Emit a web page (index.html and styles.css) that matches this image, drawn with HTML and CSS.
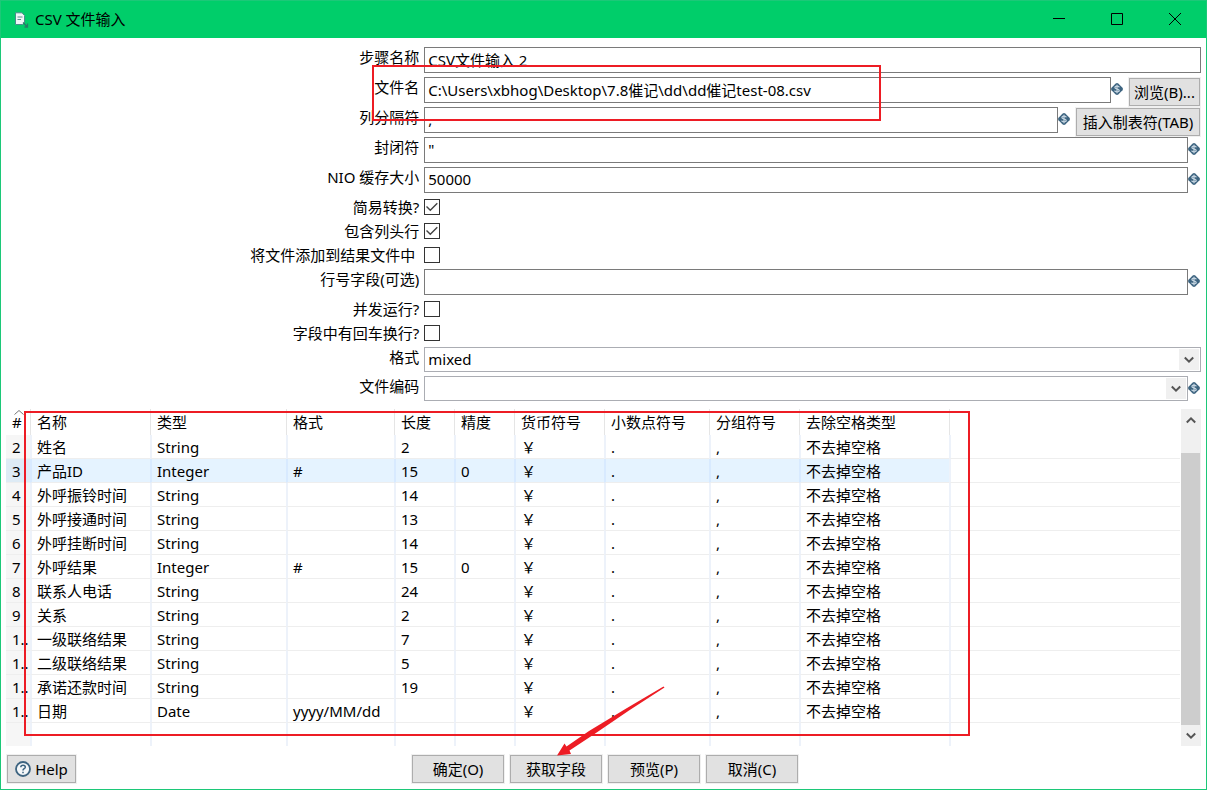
FILE: index.html
```html
<!DOCTYPE html>
<html lang="zh-CN">
<head>
<meta charset="utf-8">
<title>CSV 文件输入</title>
<link rel="stylesheet" href="styles.css">
</head>
<body>
<svg class="defs" aria-hidden="true">
  <symbol id="var" viewBox="0 0 12 12">
    <path d="M6 0L7.300 .5L11.500 4.700L12 6L11.500 7.300L7.300 11.500L6 12L4.700 11.500L.5 7.300L0 6L.5 4.700L4.700 .5Z" fill="#3d6480"/>
    <path d="M8.300 4.300C8 2.900 3.900 2.700 3.900 4.500C3.900 6.300 8.200 5.500 8.200 7.500C8.200 9.300 4 9.100 3.600 7.600M6 1.800V10.200" fill="none" stroke="#c3d3df" stroke-width="1.300"/>
  </symbol>
  <symbol id="down" viewBox="0 0 10 8"><path d="M.8 1.500L5 5.700L9.200 1.500" fill="none" stroke="#555" stroke-width="2"/></symbol>
  <symbol id="up" viewBox="0 0 10 8"><path d="M.8 6.500L5 2.300L9.200 6.500" fill="none" stroke="#555" stroke-width="2"/></symbol>
  <symbol id="tick" viewBox="0 0 16 16"><path d="M2.500 7.500L6.300 11.300L13.300 4.300" fill="none" stroke="#444" stroke-width="1.400"/></symbol>
</svg>
<main class="window">
  <header class="titlebar">
    <svg class="app-icon" viewBox="0 0 15 16">
      <path d="M1.500.8H8L10.500 3.500V11L8.500 12.500H1.500Z" fill="#eef7f6" stroke="#4a8c8c"/>
      <path d="M3.500 5H8.500M3.500 7.500H7" stroke="#5d9090" fill="none"/>
      <path d="M9 10.500L13 14.500M13.500 11.500V15H10.500" stroke="#287a68" stroke-width="1.300" fill="none"/>
    </svg>
    <h1 class="title">CSV 文件输入</h1>
    <button class="caption" aria-label="最小化"><svg viewBox="0 0 14 14"><path d="M1 6.500H13" /></svg></button>
    <button class="caption" aria-label="最大化"><svg viewBox="0 0 14 14"><path d="M1.500 1.500H12.500V12.500H1.500Z"/></svg></button>
    <button class="caption" aria-label="关闭"><svg viewBox="0 0 14 14"><path d="M1 1L13 13M13 1L1 13"/></svg></button>
  </header>

  <form class="form">
    <div class="row"><label for="step">步骤名称</label><div class="field"><input class="text" id="step" value="CSV文件输入 2"></div></div>
    <div class="row"><label for="file">文件名</label><div class="field side"><input class="text" id="file" value="C:\Users\xbhog\Desktop\7.8催记\dd\dd催记test-08.csv"><svg class="var"><use href="#var"/></svg><button type="button" class="btn browse">浏览(B)...</button></div></div>
    <div class="row"><label for="sep">列分隔符</label><div class="field side"><input class="text" id="sep" value=","><svg class="var"><use href="#var"/></svg><button type="button" class="btn tab">插入制表符(TAB)</button></div></div>
    <div class="row"><label for="quote">封闭符</label><div class="field side"><input class="text" id="quote" value="&quot;"><svg class="var"><use href="#var"/></svg></div></div>
    <div class="row"><label for="nio">NIO 缓存大小</label><div class="field side"><input class="text" id="nio" value="50000"><svg class="var"><use href="#var"/></svg></div></div>
    <div class="row check"><label for="lazy">简易转换?</label><div class="field"><span class="box"><input type="checkbox" id="lazy" checked><svg><use href="#tick"/></svg></span></div></div>
    <div class="row check"><label for="head">包含列头行</label><div class="field"><span class="box"><input type="checkbox" id="head" checked><svg><use href="#tick"/></svg></span></div></div>
    <div class="row check"><label for="add" class="spaced">将文件添加到结果文件中</label><div class="field"><span class="box"><input type="checkbox" id="add"><svg><use href="#tick"/></svg></span></div></div>
    <div class="row"><label for="rownum">行号字段(可选)</label><div class="field side"><input class="text" id="rownum" value=""><svg class="var"><use href="#var"/></svg></div></div>
    <div class="row check"><label for="par">并发运行?</label><div class="field"><span class="box"><input type="checkbox" id="par"><svg><use href="#tick"/></svg></span></div></div>
    <div class="row check"><label for="nl">字段中有回车换行?</label><div class="field"><span class="box"><input type="checkbox" id="nl"><svg><use href="#tick"/></svg></span></div></div>
    <div class="row combo"><label for="fmt">格式</label><div class="field"><span class="drop"><select id="fmt"><option>mixed</option></select><span class="arrow"><svg><use href="#down"/></svg></span></span></div></div>
    <div class="row combo"><label for="enc">文件编码</label><div class="field side"><span class="drop"><select id="enc"><option></option></select><span class="arrow"><svg><use href="#down"/></svg></span></span><svg class="var"><use href="#var"/></svg></div></div>
  </form>

  <section class="grid">
    <div class="grid-view">
      <table>
        <colgroup><col class="c-num"><col class="c-name"><col class="c-type"><col class="c-format"><col class="c-short"><col class="c-short"><col class="c-cur"><col class="c-dec"><col class="c-cur"><col class="c-trim"><col></colgroup>
        <thead><tr><th class="num"><svg class="sort" viewBox="0 0 10 5"><path d="M.5 4.500L5 .5L9.500 4.500"/></svg>#</th><th>名称</th><th>类型</th><th>格式</th><th>长度</th><th>精度</th><th>货币符号</th><th>小数点符号</th><th>分组符号</th><th>去除空格类型</th><th></th></tr></thead>
        <tbody>
          <tr><td>2</td><td>姓名</td><td>String</td><td></td><td>2</td><td></td><td>&#xFFE5;</td><td>.</td><td>,</td><td>不去掉空格</td><td></td></tr>
          <tr class="selected"><td>3</td><td>产品ID</td><td>Integer</td><td>#</td><td>15</td><td>0</td><td>&#xFFE5;</td><td>.</td><td>,</td><td>不去掉空格</td><td></td></tr>
          <tr><td>4</td><td>外呼振铃时间</td><td>String</td><td></td><td>14</td><td></td><td>&#xFFE5;</td><td>.</td><td>,</td><td>不去掉空格</td><td></td></tr>
          <tr><td>5</td><td>外呼接通时间</td><td>String</td><td></td><td>13</td><td></td><td>&#xFFE5;</td><td>.</td><td>,</td><td>不去掉空格</td><td></td></tr>
          <tr><td>6</td><td>外呼挂断时间</td><td>String</td><td></td><td>14</td><td></td><td>&#xFFE5;</td><td>.</td><td>,</td><td>不去掉空格</td><td></td></tr>
          <tr><td>7</td><td>外呼结果</td><td>Integer</td><td>#</td><td>15</td><td>0</td><td>&#xFFE5;</td><td>.</td><td>,</td><td>不去掉空格</td><td></td></tr>
          <tr><td>8</td><td>联系人电话</td><td>String</td><td></td><td>24</td><td></td><td>&#xFFE5;</td><td>.</td><td>,</td><td>不去掉空格</td><td></td></tr>
          <tr><td>9</td><td>关系</td><td>String</td><td></td><td>2</td><td></td><td>&#xFFE5;</td><td>.</td><td>,</td><td>不去掉空格</td><td></td></tr>
          <tr><td>1..</td><td>一级联络结果</td><td>String</td><td></td><td>7</td><td></td><td>&#xFFE5;</td><td>.</td><td>,</td><td>不去掉空格</td><td></td></tr>
          <tr><td>1..</td><td>二级联络结果</td><td>String</td><td></td><td>5</td><td></td><td>&#xFFE5;</td><td>.</td><td>,</td><td>不去掉空格</td><td></td></tr>
          <tr><td>1..</td><td>承诺还款时间</td><td>String</td><td></td><td>19</td><td></td><td>&#xFFE5;</td><td>.</td><td>,</td><td>不去掉空格</td><td></td></tr>
          <tr><td>1..</td><td>日期</td><td>Date</td><td>yyyy/MM/dd</td><td></td><td></td><td>&#xFFE5;</td><td>.</td><td>,</td><td>不去掉空格</td><td></td></tr>
          <tr class="blank"><td></td><td></td><td></td><td></td><td></td><td></td><td></td><td></td><td></td><td></td><td></td></tr>
        </tbody>
      </table>
    </div>
    <div class="scroll">
      <button class="scroll-btn" aria-label="向上滚动"><svg><use href="#up"/></svg></button>
      <div class="track"><div class="thumb"></div></div>
      <button class="scroll-btn" aria-label="向下滚动"><svg><use href="#down"/></svg></button>
    </div>
  </section>

  <footer class="footer">
    <button class="btn help"><svg viewBox="0 0 16 16"><circle cx="8" cy="8" r="7" fill="#f4f7f9" stroke="#3d6480" stroke-width="1.800"/><path d="M5.800 6.300C5.800 3.600 10.300 3.700 10.300 6.200C10.300 7.800 8 7.700 8 9.500M8 10.800V12.300" fill="none" stroke="#3d6480" stroke-width="1.500"/></svg>Help</button>
    <div class="actions">
      <button class="btn">确定(O)</button>
      <button class="btn">获取字段</button>
      <button class="btn">预览(P)</button>
      <button class="btn">取消(C)</button>
    </div>
  </footer>

  <div class="mark mark-file"></div>
  <div class="mark mark-fields"></div>
  <svg class="pointer" viewBox="0 0 108 70"><path d="M107.500 1.500L72 24.500L36 49L12.500 64.500L14 68L0 69.500L7.500 57.500L9.500 60.500L32 45L70 22L106.500 .5Z" fill="#ed1c24"/></svg>
</main>
</body>
</html>
```
FILE: styles.css
```css
* {
  box-sizing: border-box;
}

body,
button,
input,
select {
  margin: 0;
  color: #000;
  font-family: "Noto Sans", "Noto Sans CJK SC", sans-serif;
  font-size: 15px;
  line-height: 20px;
}

.defs {
  position: absolute;
  width: 0;
  height: 0;
}

.window {
  position: relative;
  display: flex;
  flex-direction: column;
  min-height: 100vh;
  border: 1px solid #1cc878;
  background: #fff;
  overflow: hidden;
}

.titlebar {
  display: flex;
  align-items: center;
  height: 37px;
  padding: 0 2px 0 13px;
  background: #00ce6a;
}

.app-icon {
  width: 15px;
  height: 16px;
}

.title {
  flex: 1;
  margin: 0 0 0 6px;
  padding-bottom: 2px;
  font-size: 15px;
  font-weight: 400;
}

.caption {
  width: 58px;
  height: 36px;
  padding: 0 0 2px;
  border: 0;
  background: none;
}

.caption svg {
  display: block;
  width: 14px;
  height: 14px;
  margin: 0 auto;
  fill: none;
  stroke: #000;
}

.form {
  padding: 7px 5px 0;
}

.row {
  display: grid;
  grid-template-columns: 35% minmax(0, 1fr);
  padding: 2px 0;
}

.row label {
  padding-right: 5px;
  text-align: right;
}

.row .spaced {
  padding-right: 9px;
}

.field {
  display: flex;
  height: 26px;
}

.side {
  padding-right: 1px;
}

.text {
  flex: 1;
  min-width: 0;
  height: 26px;
  padding: 0 3px 2px;
  border: 1px solid #7a7a7a;
  background: #fff;
}

.var {
  width: 12px;
  height: 12px;
  margin-top: 6px;
}

.btn {
  height: 28px;
  padding: 0;
  border: 1px solid #adadad;
  background: #e1e1e1;
  box-shadow: 0 0 0 1px #f0f0f0;
  white-space: nowrap;
}

.browse,
.tab {
  margin: 1px 0 0 6px;
}

.browse {
  width: 71px;
}

.tab {
  width: 124px;
}

.check {
  align-items: center;
}

.check .field {
  height: 20px;
  align-items: center;
}

.box {
  position: relative;
  width: 16px;
  height: 16px;
}

.box input {
  display: block;
  appearance: none;
  width: 16px;
  height: 16px;
  border: 1px solid #333;
  background: #fff;
}

.box svg {
  position: absolute;
  inset: 0;
  width: 16px;
  height: 16px;
  visibility: hidden;
  pointer-events: none;
}

.box input:checked + svg {
  visibility: visible;
}

.combo .field {
  height: 25px;
}

.drop {
  position: relative;
  flex: 1;
}

.drop select {
  appearance: none;
  display: block;
  width: 100%;
  height: 25px;
  padding: 0 24px 2px 3px;
  border: 1px solid #abadb3;
  border-radius: 0;
  background: #fff;
}

.arrow {
  position: absolute;
  top: 2px;
  right: 2px;
  bottom: 2px;
  display: grid;
  place-items: center;
  width: 20px;
  background: #f0f0f0;
  pointer-events: none;
}

.arrow svg,
.scroll-btn svg {
  display: block;
  width: 10px;
  height: 8px;
}

.grid {
  display: flex;
  flex: 1;
  padding: 6px 5px 0;
}

.grid-view {
  flex: 1;
  min-width: 0;
}

table {
  width: 100%;
  table-layout: fixed;
  border-collapse: separate;
  border-spacing: 0;
}

.c-num { width: 24px; }
.c-name { width: 120px; }
.c-type { width: 136px; }
.c-format { width: 108px; }
.c-short { width: 60px; }
.c-cur { width: 90px; }
.c-dec { width: 105px; }
.c-trim { width: 150px; }

th,
td {
  overflow: hidden;
  padding: 0 0 0 5px;
  font-weight: 400;
  text-align: left;
  white-space: nowrap;
}

th {
  height: 26px;
  padding-left: 6px;
  border-left: 1px solid #e5e5e5;
}

th.num {
  position: relative;
  border-left: 0;
}

.sort {
  position: absolute;
  top: 1px;
  left: 8px;
  width: 10px;
  height: 5px;
  fill: none;
  stroke: #777;
}

td {
  height: 24px;
  border-bottom: 1px solid #eee;
  border-left: 2px solid #edf2fa;
}

td:first-child {
  padding-left: 6px;
  border-left: 0;
  background: #f6f6f6;
}

.selected td:not(:last-child) {
  border-left-color: #d8eaff;
  background: #e5f3ff;
}

.selected td:first-child {
  background: #deebf5;
}

.blank td {
  height: 23px;
  border-bottom: 0;
}

.scroll {
  display: flex;
  flex-direction: column;
  width: 20px;
  margin-left: 1px;
  background: #f0f0f0;
}

.scroll-btn {
  display: grid;
  place-items: center;
  height: 21px;
  padding: 0;
  border: 0;
  background: none;
}

.track {
  display: flex;
  flex: 1;
  padding: 23px 1px 0 0;
}

.thumb {
  flex: 1;
  background: #cdcdcd;
}

.footer {
  display: grid;
  grid-template-columns: 1fr auto 1fr;
  padding: 9px 3px 6px 6px;
}

.help {
  display: flex;
  align-items: center;
  justify-content: center;
  gap: 4px;
  width: 69px;
}

.help svg {
  width: 16px;
  height: 16px;
}

.actions {
  display: flex;
  gap: 6px;
}

.actions .btn {
  width: 92px;
}

.mark {
  position: absolute;
  border: 2px solid #ed1c24;
  pointer-events: none;
}

.mark-file {
  top: 64px;
  left: 371px;
  width: 509px;
  height: 56px;
}

.mark-fields {
  top: 410px;
  left: 23px;
  width: 946px;
  height: 325px;
}

.pointer {
  position: absolute;
  top: 685px;
  left: 556px;
  width: 108px;
  height: 70px;
  pointer-events: none;
}
```
